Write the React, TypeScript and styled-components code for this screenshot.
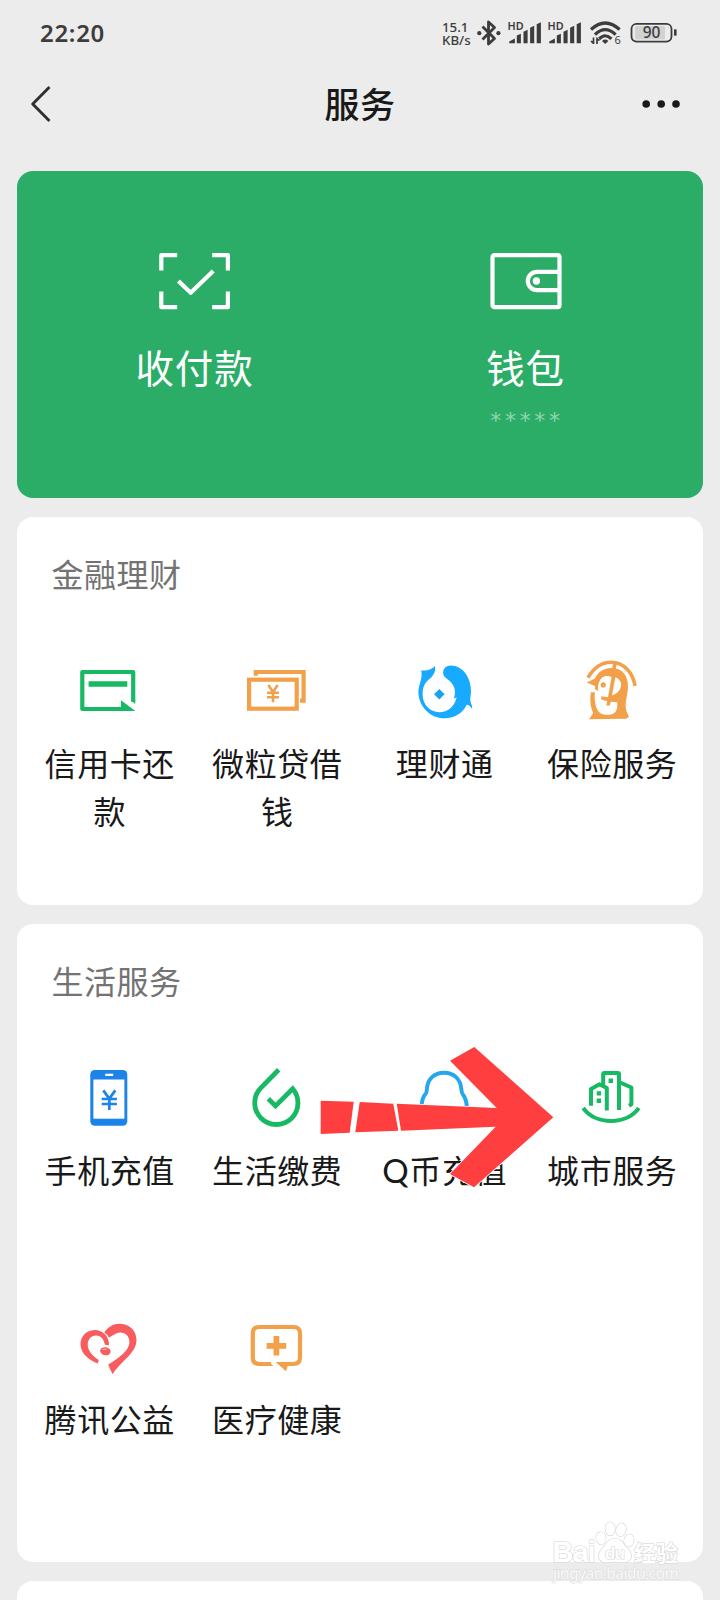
import React from "react";
import styled, { createGlobalStyle } from "styled-components";

const GlobalStyle = createGlobalStyle`
  body {
    margin: 0;
    background: #ececec;
  }
  * {
    box-sizing: border-box;
  }
  svg {
    display: block;
    flex: none;
    overflow: visible;
  }
`;

const Screen = styled.div`
  position: relative;
  width: 720px;
  height: 1600px;
  overflow: hidden;
  background: #ececec;
  color: #191919;
  font-family: "Noto Sans CJK SC", "Noto Sans", sans-serif;
`;

const StatusBar = styled.header`
  display: flex;
  align-items: center;
  justify-content: space-between;
  height: 66px;
  padding: 0 43px 0 40px;
  color: #3c3c3c;
`;

const Clock = styled.time`
  padding-bottom: 2px;
  font-family: "Noto Sans", sans-serif;
  font-size: 24px;
  font-weight: 600;
  letter-spacing: 0.7px;
`;

const StatusIcons = styled.div`
  display: flex;
  align-items: center;
  gap: 7px;
`;

const Speed = styled.div`
  width: 28px;
  padding-top: 1px;
  font-family: "Noto Sans", sans-serif;
  font-size: 13.3px;
  font-weight: 500;
  line-height: 12.6px;
  white-space: nowrap;
`;

const NavBar = styled.nav`
  display: grid;
  grid-template-columns: 1fr auto 1fr;
  align-items: center;
  height: 76px;
  padding: 0 39px 0 30px;
`;

const NavTitle = styled.h1`
  margin: 0 0 2px 9px;
  font-size: 35px;
  font-weight: 500;
  line-height: 50px;
  letter-spacing: 0.5px;
`;

const MoreSlot = styled.div`
  justify-self: end;
`;

const Content = styled.main`
  display: flex;
  flex-direction: column;
  gap: 19px;
  padding: 29px 17px 0;
`;

const PayPanel = styled.section`
  display: flex;
  height: 327px;
  padding: 81px 12px 0;
  border-radius: 16px;
  background: #2bad67;
  color: #fff;
`;

const PayEntry = styled.div`
  display: flex;
  flex: 1;
  flex-direction: column;
  align-items: center;
`;

const PayLabel = styled.div`
  margin-top: 27px;
  font-size: 38.5px;
  line-height: 58px;
  letter-spacing: 0.8px;
`;

const Mask = styled.div`
  margin-top: 13px;
  padding-left: 3px;
  color: #93d5b2;
  font-family: "DejaVu Sans", sans-serif;
  font-size: 22px;
  line-height: 26px;
  letter-spacing: 3.7px;
`;

const Card = styled.section<{ $height: number }>`
  position: relative;
  flex: none;
  height: ${(p) => p.$height}px;
  padding: 32px 8px 0;
  border-radius: 16px;
  background: #fff;
`;

const CardTitle = styled.h2`
  margin: 0 0 58px;
  padding-left: 26.5px;
  color: #737373;
  font-size: 32px;
  font-weight: 400;
  line-height: 48px;
  letter-spacing: 0.5px;
`;

const ServiceGrid = styled.div`
  display: grid;
  grid-template-columns: repeat(4, 1fr);
  grid-auto-rows: 249px;
`;

const Service = styled.div`
  display: flex;
  flex-direction: column;
  align-items: center;
`;

const ServiceLabel = styled.div`
  width: 136px;
  margin-top: 11px;
  padding-left: 2px;
  font-size: 32px;
  line-height: 48px;
  letter-spacing: 0.6px;
  text-align: center;
`;

const LatinInitial = styled.span`
  font-family: Lato, sans-serif;
  font-size: 33px;
  line-height: 1;
`;

const ArrowMark = styled.svg`
  position: absolute;
  left: 301px;
  top: 120px;
`;

const Watermark = styled.div`
  position: absolute;
  left: 552px;
  top: 1518px;
`;

const stroke = (color: string, width: number) => ({
  fill: "none",
  stroke: color,
  strokeWidth: width,
});

const GREEN = "#17b965";
const ORANGE = "#f2a04a";
const BLUE = "#1c84e8";

const Bluetooth = () => (
  <svg width="24" height="26" viewBox="0 0 24 26">
    <path d="M5.5 6.5 L17.5 18.5 L11.5 24 V2 L17.5 7.5 L5.5 19.5" {...stroke("#3c3c3c", 2.8)} strokeLinejoin="round" />
    <circle cx="2.3" cy="13.2" r="2.1" fill="#3c3c3c" />
    <circle cx="21.4" cy="13.2" r="2.1" fill="#3c3c3c" />
  </svg>
);

const Signal = () => (
  <svg width="33" height="24" viewBox="0 0 33 24">
    <text x="-0.5" y="9.3" fontFamily="Noto Sans" fontSize="10.8" fontWeight="600" letterSpacing="0.2" fill="#3c3c3c">
      HD
    </text>
    <path
      d="M1.2 22.3V20.5L6.9 17.4V22.3ZM8.8 22.3V14.5L12.9 12.8V22.3ZM15.5 22.3V10.8L19.6 8.8V22.3ZM22.1 22.3V6.8L26.2 4.8V22.3ZM28.7 22.3V3.2L32.9 1.3V22.3Z"
      fill="#3c3c3c"
    />
  </svg>
);

const Wifi = () => (
  <svg width="35" height="26" viewBox="0 0 35 26">
    <g {...stroke("#3c3c3c", 3.2)}>
      <path d="M3 9.5 Q17.2 -3.5 31.6 9.5" />
      <path d="M7 14.6 Q17.2 4.6 27.6 14.6" />
      <path d="M11.2 18.9 Q17.2 12.6 23.4 18.9" />
    </g>
    <path d="M14 20.9Q17.2 18.1 20.4 20.9L17.2 24.1Z" fill="#3c3c3c" />
    <path d="M5.5 17.5V24M9 17.5V24M3 21L5.5 23.5M9 18.5L11.5 20.5" {...stroke("#3c3c3c", 1.7)} />
    <text x="26.6" y="23.7" fontFamily="Noto Sans" fontSize="11" fill="#3c3c3c">
      6
    </text>
  </svg>
);

const Battery = () => (
  <svg width="47" height="22" viewBox="0 0 47 22">
    <rect x="5" y="4" width="30" height="13.5" rx="1.5" fill="#d2d2d2" />
    <rect x="1.5" y="1.8" width="40" height="17.8" rx="5" {...stroke("#3c3c3c", 1.8)} />
    <rect x="44" y="7.3" width="2.6" height="6.4" rx="0.8" fill="#3c3c3c" />
    <text x="21.5" y="16.3" textAnchor="middle" fontFamily="Noto Sans" fontSize="15.5" fontWeight="500" fill="#3c3c3c">
      90
    </text>
  </svg>
);

const BackIcon = () => (
  <svg width="24" height="38" viewBox="0 0 24 38">
    <path d="M19.5 2 L2.7 19 L19.5 36" {...stroke("#303030", 2.9)} strokeLinejoin="round" />
  </svg>
);

const MoreIcon = () => (
  <svg width="40" height="10" viewBox="0 0 40 10">
    <circle cx="5.2" cy="5" r="3.8" fill="#191919" />
    <circle cx="20.2" cy="5" r="3.8" fill="#191919" />
    <circle cx="35" cy="5" r="3.8" fill="#191919" />
  </svg>
);

const ScanIcon = () => (
  <svg width="72" height="58" viewBox="0 0 72 58">
    <g {...stroke("#fff", 4.2)} strokeLinejoin="round">
      <path d="M18.2 3.2H2.3V18.5M53.2 3.2H68.9V18.5M18.2 55.2H2.3V39.5M53.2 55.2H68.9V39.5" />
      <path d="M19.4 29L31.7 40.8L54.2 19" />
    </g>
  </svg>
);

const WalletIcon = () => (
  <svg width="72" height="58" viewBox="0 0 72 58">
    <rect x="2.5" y="3.2" width="67" height="52" rx="2" {...stroke("#fff", 4.2)} />
    <path d="M69 19.8H47A9.2 9.2 0 0 0 47 38.2H69" {...stroke("#fff", 4.2)} />
    <circle cx="46.4" cy="29" r="3.7" fill="#fff" />
  </svg>
);

const CreditCardIcon = () => (
  <svg width="72" height="72" viewBox="0 0 72 72">
    <path d="M50 54H9.3V17H60.2V46.8" {...stroke(GREEN, 4.2)} strokeLinejoin="round" />
    <path d="M58.2 45.5L62.2 49V45H58.2ZM15.6 26.3H54.3V31.7H15.6ZM48 45.3L62.3 55.9H48Z" fill={GREEN} />
  </svg>
);

const LoanIcon = () => (
  <svg width="72" height="72" viewBox="0 0 72 72">
    <rect x="9.1" y="24.7" width="47.6" height="29" {...stroke(ORANGE, 4.2)} />
    <path d="M15.8 20.8V17H63.6V45.6H60" {...stroke(ORANGE, 4.2)} />
    <path d="M28.3 30L33 37L37.7 30M33 37V47.2M27 37.7H39M27 42.2H39" {...stroke(ORANGE, 2.6)} />
  </svg>
);

const WealthIcon = () => (
  <svg width="72" height="72" viewBox="0 0 72 72">
    <path
      d="M13.2 15.4Q21.5 16.5 27 11Q28.2 17 23.2 22.5C17 27.5 14.6 31 14.6 39.5C14.6 49.5 22 57.2 31.3 57.2C39.8 57.2 46.7 51.5 48.6 42.5L45.8 43.5C47.7 39 47.3 33.5 44.8 29.8C42.5 26.2 39.8 24.7 37.4 22.6C33.2 18.8 34.8 10.5 42.3 10.4C55.5 10.3 63.3 23.5 63 36.5C62.9 40 62 43 62.3 45.3C62.6 48.5 64.6 50.3 64.2 54Q61.8 50 58.7 49.8C55 58 46.5 63.3 36.7 63.3C21.5 63.3 10.4 50.8 10.4 36.7C10.4 29.5 15 23.5 13.2 15.4Z"
      fill="#17aaff"
    />
    <path d="M31.3 34L36.6 39.3L31.3 44.6L26 39.3Z" fill="#1ba2ee" />
  </svg>
);

const InsuranceIcon = () => (
  <svg width="72" height="72" viewBox="0 0 72 72">
    <path d="M13 22.6C20 11 27.5 7.3 36 7.3C48.5 7.3 58 17.5 60 31" {...stroke(ORANGE, 3.6)} />
    <path
      d="M11.8 27.5L20 23.5C23 16.5 29.5 13 36 13C47.5 13 53.3 20.5 53 32C52.7 41 49.8 46 51 54Q52 59 54 61.5L51.5 63.7L14 64.2L18.2 58C15.5 52 14.8 46 15.8 37.2H19.8C19.2 44 20 50 22.3 54.5C24.5 59 29 60.2 34 59.8C40.5 59.3 42.8 55.5 42.3 47.2L35.8 46.7L34.8 50.6H31.3L32.3 46.2L26.3 44.6V41.2L33 42.2L36.6 22C30 19.5 26 22 24 27.5C22.4 31.5 22.8 33.5 23.4 36.3L19.5 33.5L20.5 31.2Z"
      fill={ORANGE}
    />
    <path d="M40.4 22.3L36.9 40.4C43.2 38.3 46.3 34 46 28.8Q45.6 24.3 40.4 22.3Z" fill="#fff" />
    <path d="M39.9 8L37.6 22" {...stroke(ORANGE, 3.6)} />
    <circle cx="28.2" cy="29.9" r="2.6" fill={ORANGE} />
  </svg>
);

const PhoneIcon = () => (
  <svg width="72" height="72" viewBox="0 0 72 72">
    <rect x="17.3" y="8" width="37" height="55.7" rx="4.5" fill={BLUE} />
    <rect x="20.4" y="17.5" width="31" height="39.2" fill="#fff" />
    <rect x="32.2" y="11.7" width="8" height="2.3" fill="#fff" />
    <path d="M30.3 28.4L36.3 36.6L42.3 28.4M36.3 36.6V48M28.7 37H43.9M28.7 42H43.9" {...stroke(BLUE, 2.7)} />
  </svg>
);

const UtilityIcon = () => (
  <svg width="72" height="72" viewBox="0 0 72 72">
    <path d="M38.7 7.8L20.4 26.3A21.6 21.6 0 1 0 52.7 26.8L35.5 43.9L28.3 36.8" {...stroke(GREEN, 4.8)} />
  </svg>
);

const QCoinIcon = () => (
  <svg width="72" height="72" viewBox="0 0 72 72">
    <path
      d="M13.6 46C13.6 38 15 34.5 17.7 31.7Q18.6 31 18.8 27.5C19.4 17 26.3 10.7 36.1 10.7C45.8 10.7 52.6 17 53.4 27.5Q53.7 31 54.6 32C57.3 35.5 58.8 39 58.8 46C58 50 54 47 53 52C50 62 22 62 20 52C19 47 15 50 13.6 46Z"
      {...stroke("#25a7ee", 3.9)}
    />
  </svg>
);

const CityIcon = () => (
  <svg width="72" height="72" viewBox="0 0 72 72">
    <g {...stroke(GREEN, 4)} strokeLinejoin="round">
      <path d="M8.2 46C20.5 63.4 51.5 63.4 63.8 46" />
      <path d="M16 43.7V27L24.5 22.3L31.8 26V48.4" />
      <path d="M28.2 23V12.2Q28.2 11 29.4 11H42.8Q44 11 44 12.2V48" />
      <path d="M44 20L56.4 25.5V42.3L54 43.8" />
    </g>
    <path d="M33.6 16.6H38V21H33.6ZM21.7 29.3H26V33.6H21.7ZM21.7 36.6H26V40.9H21.7Z" fill={GREEN} />
  </svg>
);

const CharityIcon = () => (
  <svg width="72" height="72" viewBox="0 0 72 72">
    <g fill="#f95c5e">
      <path d="M36 34.3C36.5 26 30 18.8 21.5 19C13 19.3 7 26 7.5 33.8C8 43 15.5 48.5 24.7 52.5L25.8 49C19.5 45 14.7 39.5 14.7 33.5C14.7 28.3 18.2 24.4 23 24.4C28.3 24.4 30.8 28.5 32 33.8Z" />
      <path d="M31.2 21.6C35.2 15.5 41 12.5 47.2 12.8C57 13.3 63.8 20 63.5 29.8C63 42.5 47.5 50.3 39.7 63.3Q37 58.3 35.2 53.8C44 47.5 56.4 41 56.4 30.5C56.4 25 52 21.2 47.2 21.4C42.7 21.6 39 25.2 35.8 26.5Q34.5 23.5 31.2 21.6Z" />
      <ellipse cx="32.4" cy="40.2" rx="5.3" ry="4" transform="rotate(10 32.4 40.2)" />
    </g>
    <path d="M29.5 38.6Q31.3 37.6 33.5 38.6" {...stroke("#fff", 0.6)} />
  </svg>
);

const MedicalIcon = () => (
  <svg width="72" height="72" viewBox="0 0 72 72">
    <path d="M31 53H19.3Q12.8 53 12.8 46.5V22.5Q12.8 16 19.3 16H53.5Q60 16 60 22.5V46.5Q60 53 53.5 53H42" {...stroke(ORANGE, 4.2)} />
    <path d="M29 51L33.3 55.1H29ZM35.5 51H49L46 60.3Z" fill={ORANGE} />
    <path d="M36.4 25V44.6M26.6 34.8H46.2" {...stroke(ORANGE, 5.8)} />
  </svg>
);

interface Entry {
  label: string;
  Icon: () => React.ReactElement;
}

const finance: Entry[] = [
  { label: "信用卡还款", Icon: CreditCardIcon },
  { label: "微粒贷借钱", Icon: LoanIcon },
  { label: "理财通", Icon: WealthIcon },
  { label: "保险服务", Icon: InsuranceIcon },
];

const living: Entry[] = [
  { label: "手机充值", Icon: PhoneIcon },
  { label: "生活缴费", Icon: UtilityIcon },
  { label: "Q币充值", Icon: QCoinIcon },
  { label: "城市服务", Icon: CityIcon },
  { label: "腾讯公益", Icon: CharityIcon },
  { label: "医疗健康", Icon: MedicalIcon },
];

const renderLabel = (label: string) =>
  /^[A-Z]/.test(label) ? (
    <>
      <LatinInitial>{label[0]}</LatinInitial>
      {label.slice(1)}
    </>
  ) : (
    label
  );

const Services = ({ items }: { items: Entry[] }) => (
  <ServiceGrid>
    {items.map(({ label, Icon }) => (
      <Service key={label}>
        <Icon />
        <ServiceLabel>{renderLabel(label)}</ServiceLabel>
      </Service>
    ))}
  </ServiceGrid>
);

export default function App() {
  return (
    <>
      <GlobalStyle />
      <Screen>
        <StatusBar>
          <Clock>22:20</Clock>
          <StatusIcons>
            <Speed>
              15.1
              <br />
              KB/s
            </Speed>
            <Bluetooth />
            <Signal />
            <Signal />
            <Wifi />
            <Battery />
          </StatusIcons>
        </StatusBar>
        <NavBar>
          <BackIcon />
          <NavTitle>服务</NavTitle>
          <MoreSlot>
            <MoreIcon />
          </MoreSlot>
        </NavBar>
        <Content>
          <PayPanel>
            <PayEntry>
              <ScanIcon />
              <PayLabel>收付款</PayLabel>
            </PayEntry>
            <PayEntry>
              <WalletIcon />
              <PayLabel>钱包</PayLabel>
              <Mask>*****</Mask>
            </PayEntry>
          </PayPanel>
          <Card $height={388}>
            <CardTitle>金融理财</CardTitle>
            <Services items={finance} />
          </Card>
          <Card $height={638}>
            <CardTitle>生活服务</CardTitle>
            <Services items={living} />
            <ArrowMark width="240" height="148" viewBox="318 1044 240 148">
              <g fill="#ff3f3f" stroke="#fff" strokeWidth="1.6" paintOrder="stroke">
                <path d="M320.7 1100.7L353.7 1101.7L349.7 1132.7L320.7 1134Z" />
                <path d="M359.7 1102L393.3 1103.7L398.3 1130.7L355.3 1132.3Z" />
                <path d="M396.7 1103.7L496.7 1108L450 1060.7L474.3 1047L553.3 1117.3L474 1187.3L450 1174L495.7 1126.7L401 1130.7Z" />
              </g>
            </ArrowMark>
          </Card>
          <Card $height={120} />
        </Content>
        <Watermark>
          <svg width="132" height="66" viewBox="0 0 132 66">
            <g fill="#fff" stroke="#d6d6d6" strokeWidth="1.2" fontFamily="Liberation Sans" fontWeight="700" paintOrder="stroke">
              <ellipse cx="49" cy="20.3" rx="4.8" ry="6.2" transform="rotate(-8 49 20.3)" />
              <ellipse cx="58.2" cy="10.8" rx="4.8" ry="6.8" />
              <ellipse cx="69" cy="11.8" rx="4.8" ry="6.6" transform="rotate(14 69 11.8)" />
              <ellipse cx="77" cy="22.5" rx="4.8" ry="6.2" transform="rotate(14 77 22.5)" />
              <path d="M63 20.5C55.5 20.5 54.5 26.5 50 31C44.5 36.5 46 44.3 54 44.5Q63 43 71.5 44.5C80 44.3 81.5 37 76 31C71 26.5 70.5 20.5 63 20.5Z" />
              <text x="0.5" y="44" fontSize="29" textLength="43">
                Bai
              </text>
              <text x="53" y="41" fontSize="17" textLength="20">
                du
              </text>
              <text x="82" y="42.5" fontFamily="Noto Sans CJK SC" fontSize="22" textLength="44">
                经验
              </text>
              <text x="1" y="61" fontFamily="Noto Sans" fontWeight="500" fontSize="15.5" textLength="126" fillOpacity="0.75" strokeWidth="0.8">
                jingyan.baidu.com
              </text>
            </g>
          </svg>
        </Watermark>
      </Screen>
    </>
  );
}
